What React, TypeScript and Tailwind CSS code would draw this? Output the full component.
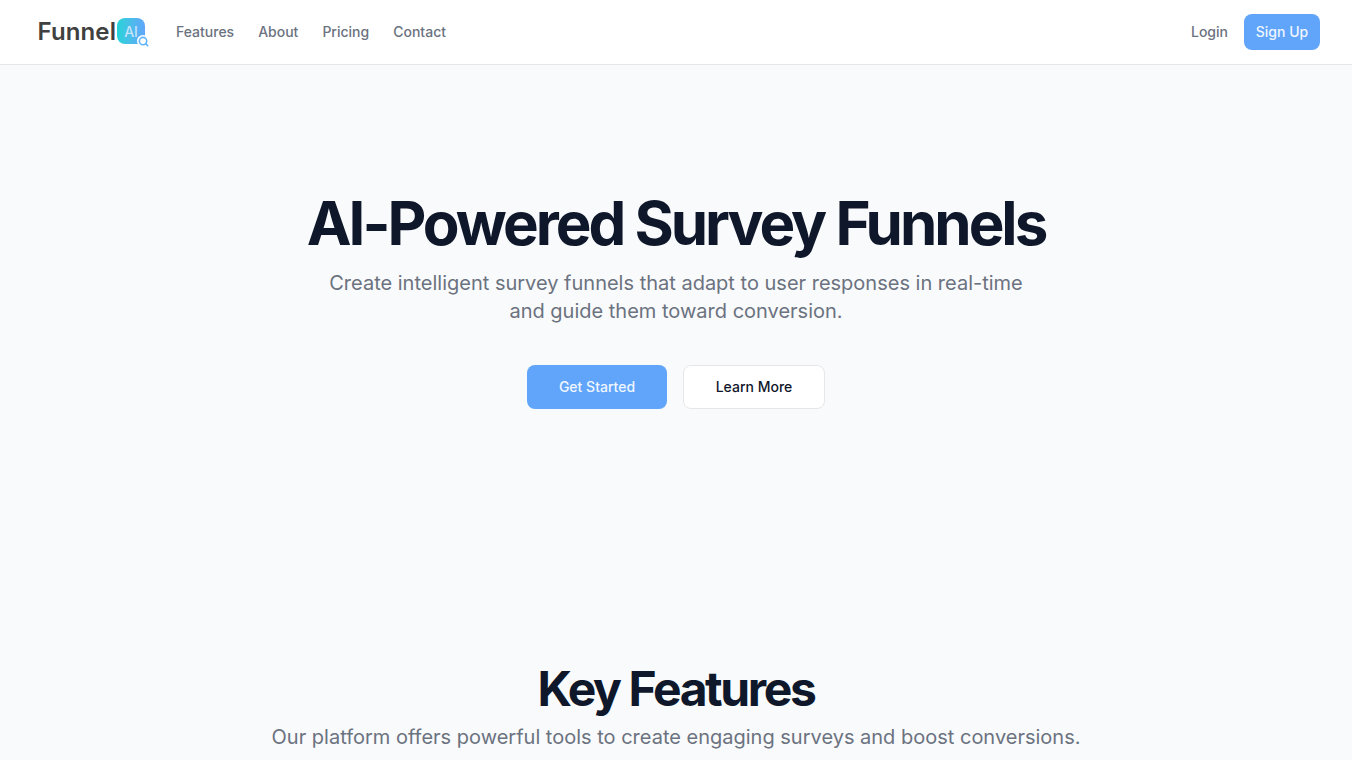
import { Search } from 'lucide-react';

export default function App() {
  return (
    <div className="h-[760px] overflow-hidden bg-[#f9fafb] font-['Inter',sans-serif]">
      {/* Header */}
      <header className="h-[65px] bg-white border-b border-[#e5e7eb] pl-8 pr-8 flex items-center justify-between">
        <div className="flex items-center">
          <div className="flex items-center w-[120px] pl-[5.5px]">
            <span className="text-[24px] leading-none font-semibold tracking-[0.005em] text-[#404040]">Funnel</span>
            <div className="relative ml-[1px] -mt-[2px]">
              <div className="w-[28px] h-[26px] rounded-[8px] bg-gradient-to-r from-[#22d3d8] to-[#60a5fa] flex items-center justify-center text-[14px] font-medium text-[#c7e3fb]">
                AI
              </div>
              <div className="absolute -right-[4px] -bottom-[3px] w-[12px] h-[12px] rounded-full bg-white flex items-center justify-center">
                <Search size={11} strokeWidth={3.5} className="text-[#60b4fa]" />
              </div>
            </div>
          </div>
          <nav className="flex items-center gap-6 ml-[24px] text-sm font-medium text-[#6b7280]">
            <span>Features</span>
            <span>About</span>
            <span>Pricing</span>
            <span>Contact</span>
          </nav>
        </div>
        <div className="flex items-center gap-4">
          <span className="text-sm font-medium text-[#6b7280]">Login</span>
          <button className="h-9 w-[76px] rounded-lg bg-[#60a5fa] text-sm font-medium text-[#eff6ff]">Sign Up</button>
        </div>
      </header>

      {/* Hero */}
      <section className="flex flex-col items-center pt-[121px]">
        <h1 className="text-[60px] leading-[75px] font-bold tracking-[-0.05em] text-[#0f172a]">AI-Powered Survey Funnels</h1>
        <p className="mt-[8px] text-[20px] leading-[28px] text-center text-[#6b7280] w-[720px]">
          Create intelligent survey funnels that adapt to user responses in real-time and guide them toward conversion.
        </p>
        <div className="flex gap-4 mt-[40px]">
          <button className="h-11 w-[140px] rounded-lg bg-[#60a5fa] text-sm font-medium text-[#eff6ff]">Get Started</button>
          <button className="h-11 w-[142px] rounded-lg bg-white border border-[#e5e7eb] text-sm font-medium text-[#0f172a]">Learn More</button>
        </div>
      </section>

      {/* Features */}
      <section className="flex flex-col items-center mt-[250px]">
        <h2 className="text-[48px] leading-[60px] font-bold tracking-[-0.05em] text-[#0f172a]">Key Features</h2>
        <p className="mt-[4px] text-[20px] leading-[28px] text-center text-[#6b7280]">
          Our platform offers powerful tools to create engaging surveys and boost conversions.
        </p>
      </section>
    </div>
  );
}
